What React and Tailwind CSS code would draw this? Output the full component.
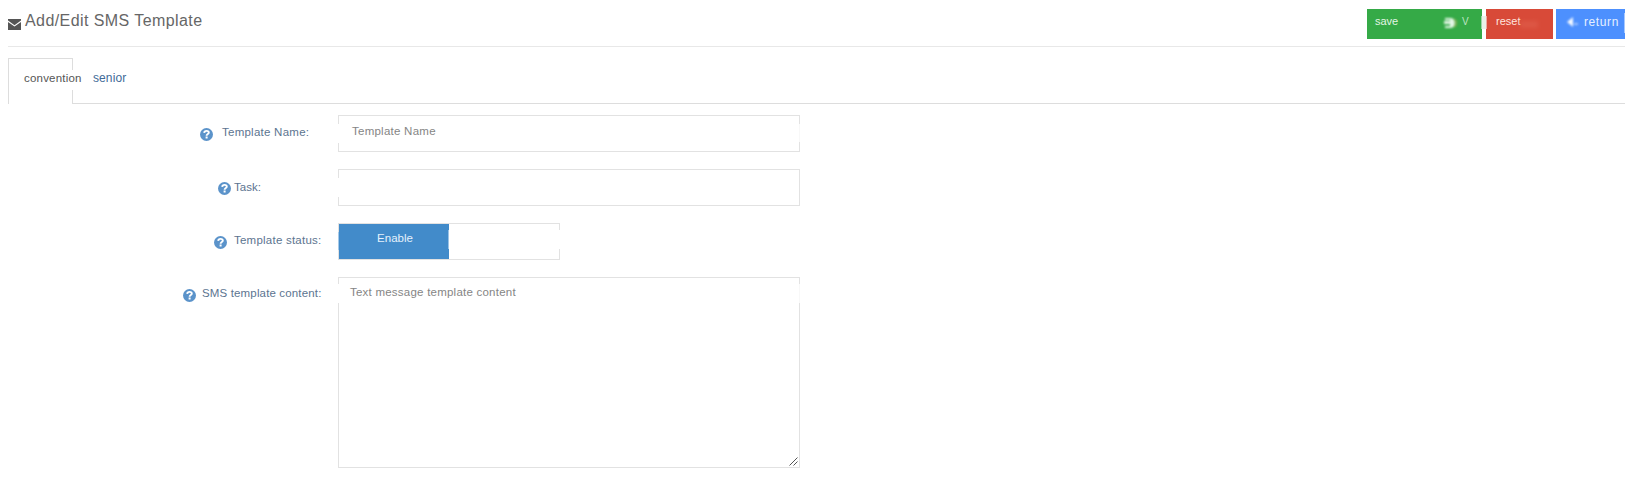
import React from "react";

function Help() {
  return (
    <svg className="block h-[13px] w-[13px] shrink-0" viewBox="0 0 13 13">
      <circle cx="6.5" cy="6.5" r="6.5" fill="#5b93ca" />
      <path d="M4.2 4.9C4.3 3.5 5.2 2.9 6.6 2.9C8 2.9 8.8 3.6 8.8 4.7C8.8 6 6.6 6.1 6.6 7.7" fill="none" stroke="#fff" strokeWidth="1.9" />
      <rect x="5.6" y="8.5" width="2" height="2" fill="#fff" />
    </svg>
  );
}

function Row({ children, icon, iconTop, label, text }) {
  return (
    <div className="flex items-start">
      <div className="flex w-[338px] shrink-0 items-start">
        <div className={icon + " " + iconTop}><Help /></div>
        <span className={"h-4 whitespace-nowrap text-[11.5px] leading-4 text-[#5c7490] " + text}>{label}</span>
      </div>
      {children}
    </div>
  );
}

export default function App() {
  return (
    <div className="h-[477px] w-[1634px] overflow-hidden bg-white pl-2 pr-[9px] font-['Liberation_Sans',sans-serif]">
      <header className="flex h-[47px] items-start border-b border-[#e8e8e8]">
        <svg className="mt-[19px] h-[11px] w-[13px] shrink-0" viewBox="0 0 13 11">
          <path d="M0 0H13V1.6L6.5 6.2L0 1.6Z" fill="#555" />
          <path d="M0 3L6.5 7.6L13 3V11H0Z" fill="#555" />
        </svg>
        <h1 className="ml-1 mt-[11px] whitespace-nowrap text-[16px] leading-5 tracking-[0.42px] text-[#666]">Add/Edit SMS Template</h1>
        <div className="ml-auto flex pt-[9px] text-white">
          <button className="relative mr-1 flex h-[30px] w-[115px] items-start bg-[#35aa47] pl-2 text-left">
            <span className="mt-1 w-[69px] text-[11px] leading-4 text-[#e3f5e4]">save</span>
            <svg className="mt-[7px] h-[14px] w-4 blur-[1px]" viewBox="0 0 16 14">
              <path d="M1 2H7C12 2 12 12 7 12H1V10H6V8H0V5H6V4H1Z" fill="#e6f7e8" />
              <path d="M10 3C13 5 13 9 10 11" fill="none" stroke="#91ad56" strokeWidth="1.5" />
            </svg>
            <span className="ml-[2px] mt-[5px] text-[10px] leading-4 text-[#bce4c1]">V</span>
            <span className="absolute -right-1 top-[7px] h-[13px] w-1 bg-[#e9f1e8]" />
            <span className="absolute right-0 top-[7px] h-[13px] w-px bg-[#9ed4a6]" />
          </button>
          <button className="relative mr-[3px] flex h-[30px] w-[67px] items-start bg-[#d84a38] pl-[10px] text-left">
            <span className="absolute left-0 top-[7px] h-[13px] w-px bg-[#ecaaa2]" />
            <span className="mt-1 text-[11px] leading-4 text-[#ffe6df]">reset</span>
            <span className="absolute left-[34px] top-[12px] h-[7px] w-[18px] bg-[#e0604e] opacity-60 blur-[2px]" />
          </button>
          <button className="relative flex h-[30px] w-[69px] items-start bg-[#4d90fe] pl-[11px] text-left">
            <svg className="mt-[7px] h-[12px] w-[12px] blur-[0.8px]" viewBox="0 0 12 12">
              <path d="M0 6L6 1V11Z" fill="#f4f9ff" />
              <path d="M7 8H11" stroke="#9fc3ff" strokeWidth="2" />
            </svg>
            <span className="ml-[5px] mt-[5px] text-[12px] leading-4 tracking-[0.6px] text-[#e5efff]">return</span>
            <span className="absolute right-0 top-1 h-5 w-px bg-[#a6c8ff]" />
          </button>
        </div>
      </header>
      <nav className="flex h-[57px] items-end">
        <div className="relative h-[46px] w-[65px] border-x border-t border-[#ddd] pl-[15px] pt-[11px]">
          <span className="absolute -right-px top-[11px] h-5 w-px bg-white" />
          <span className="relative block whitespace-nowrap text-[11.5px] leading-4 tracking-[0.2px] text-[#555]">convention</span>
        </div>
        <div className="h-[46px] flex-1 border-b border-[#ddd] pl-[20px] pt-[12px] text-[12px] leading-4 tracking-[0.1px] text-[#426b98]">senior</div>
      </nav>
      <main className="-ml-2 flex flex-col gap-[17px] pt-[11px]">
        <Row label="Template Name:" icon="ml-[200px]" iconTop="mt-[13px]" text="ml-[9px] mt-[9px] tracking-[0.25px]">
          <div className="relative h-[37px] w-[462px] border border-[#e2e2e2] pl-[13px] pt-[7px]">
            <span className="absolute -left-px top-2 h-[19px] w-px bg-white" />
            <span className="absolute -right-px top-2 h-[18px] w-px bg-[#f8f8f8]" />
            <span className="block text-[11.5px] leading-4 tracking-[0.25px] text-[#858585]">Template Name</span>
          </div>
        </Row>
        <Row label="Task:" icon="ml-[218px]" iconTop="mt-[13px]" text="ml-[3px] mt-[10px]">
          <div className="relative h-[37px] w-[462px] border border-[#e2e2e2]">
            <span className="absolute -left-px top-2 h-[19px] w-px bg-white" />
          </div>
        </Row>
        <Row label="Template status:" icon="ml-[214px]" iconTop="mt-[13px]" text="ml-[7px] mt-[9px] tracking-[0.23px]">
          <div className="relative flex h-[37px] w-[222px] border border-[#e2e2e2]">
            <div className="h-[35px] w-[110px] bg-[#428bca] pl-[2px] pt-[6px] text-center text-[11.5px] leading-4 text-[#e5f1fc]">Enable</div>
            <span className="absolute -left-px top-[8px] h-[18px] w-px bg-[#a5c9e8]" />
            <span className="absolute left-[109px] top-[6px] h-[19px] w-px bg-[#9cc3e6]" />
            <span className="absolute -right-px top-[6px] h-[19px] w-px bg-white" />
          </div>
        </Row>
        <Row label="SMS template content:" icon="ml-[183px]" iconTop="mt-[12px]" text="ml-[6px] mt-[8px] tracking-[0.15px]">
          <div className="relative h-[191px] w-[462px] border border-[#e2e2e2] pl-[11px] pt-[6px]">
            <span className="absolute -left-px top-[6px] h-[19px] w-px bg-white" />
            <span className="absolute -right-px top-[6px] h-[19px] w-px bg-[#f8f8f8]" />
            <span className="block text-[11.5px] leading-4 tracking-[0.23px] text-[#858585]">Text message template content</span>
            <svg className="absolute bottom-px right-px h-[9px] w-[9px]" viewBox="0 0 9 9">
              <path d="M0.5 8.5L8.5 0.5M4.5 8.5L8.5 4.5" stroke="#555" strokeWidth="1" />
            </svg>
          </div>
        </Row>
      </main>
    </div>
  );
}
